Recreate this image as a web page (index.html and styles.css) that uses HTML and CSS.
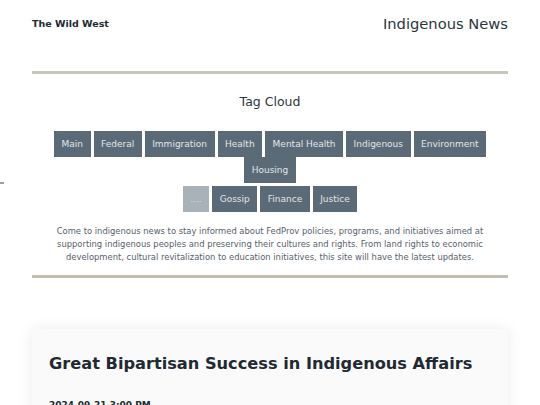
FILE: index.html
```html
<!DOCTYPE html>
<html lang="en">
<head>
<meta charset="utf-8">
<title>Indigenous News</title>
<link rel="stylesheet" href="styles.css">
</head>
<body>
<span class="edge-mark"></span>
<div class="container">
  <header class="site-header">
    <a class="brand" href="#">The Wild West</a>
    <span class="site-title">Indigenous News</span>
  </header>
  <hr class="rule">
  <section class="tag-section">
    <h2 class="tag-title">Tag Cloud</h2>
    <div class="tags">
      <a class="tag" href="#">Main</a>
      <a class="tag" href="#">Federal</a>
      <a class="tag" href="#">Immigration</a>
      <a class="tag" href="#">Health</a>
      <a class="tag" href="#">Mental Health</a>
      <a class="tag" href="#">Indigenous</a>
      <a class="tag" href="#">Environment</a>
      <a class="tag" href="#">Housing</a>
    </div>
    <div class="tags tags-second">
      <span class="tag tag-muted">....</span>
      <a class="tag" href="#">Gossip</a>
      <a class="tag" href="#">Finance</a>
      <a class="tag" href="#">Justice</a>
    </div>
    <p class="intro">Come to indigenous news to stay informed about FedProv policies, programs, and initiatives aimed at supporting indigenous peoples and preserving their cultures and rights. From land rights to economic development, cultural revitalization to education initiatives, this site will have the latest updates.</p>
  </section>
  <hr class="rule rule-bottom">
  <article class="card">
    <h1 class="card-title">Great Bipartisan Success in Indigenous Affairs</h1>
    <div class="card-date">2024-09-21 3:00 PM</div>
  </article>
</div>
</body>
</html>
```
FILE: styles.css
```css
html, body {
  margin: 0;
  padding: 0;
  background: #ffffff;
  font-family: "DejaVu Sans", "Noto Sans", sans-serif;
  color: #212a33;
}

.edge-mark {
  position: absolute;
  left: 0;
  top: 182px;
  width: 4px;
  height: 2px;
  background: #9aa0a6;
}

.container {
  margin: 0 32px;
}

.site-header {
  height: 46px;
  display: flex;
  justify-content: space-between;
  align-items: center;
}

.brand {
  font-weight: bold;
  font-size: 9.5px;
  color: #212a33;
  text-decoration: none;
}

.site-title {
  font-size: 14.7px;
  color: #2c3640;
}

.rule {
  margin: 25px 0 0;
  border: 0;
  height: 3px;
  background: #c6c6b6;
}

.rule-bottom {
  margin-top: 11px;
  background: #c2beb2;
}

.tag-section {
  padding: 0 18px;
}

.tag-title {
  margin: 20px 0 0;
  font-size: 12.5px;
  line-height: 16px;
  font-weight: normal;
  text-align: center;
  color: #2c3640;
}

.tags {
  margin-top: 21px;
  display: flex;
  flex-wrap: wrap;
  justify-content: center;
  column-gap: 3px;
  row-gap: 0;
}

.tags-second {
  margin-top: 3px;
}

.tag {
  display: flex;
  align-items: center;
  height: 26px;
  padding: 0 7.5px;
  background: #5a6a77;
  color: #e2e6ea;
  font-size: 9px;
  text-decoration: none;
  box-sizing: border-box;
}

.tag-muted {
  background: #a9b1b9;
  color: #d9dde1;
}

.intro {
  margin: 13px 0 0;
  font-size: 8.4px;
  line-height: 13px;
  text-align: center;
  color: #56606a;
}

.card {
  margin-top: 51px;
  background: #fafafa;
  box-shadow: 0 0 14px rgba(0, 0, 0, 0.08);
  padding: 25px 17px 20px;
}

.card-title {
  margin: 0;
  font-size: 16.2px;
  line-height: 20px;
  font-weight: bold;
  color: #212a33;
}

.card-date {
  margin-top: 26px;
  font-size: 9px;
  font-weight: bold;
  color: #212a33;
}
```
